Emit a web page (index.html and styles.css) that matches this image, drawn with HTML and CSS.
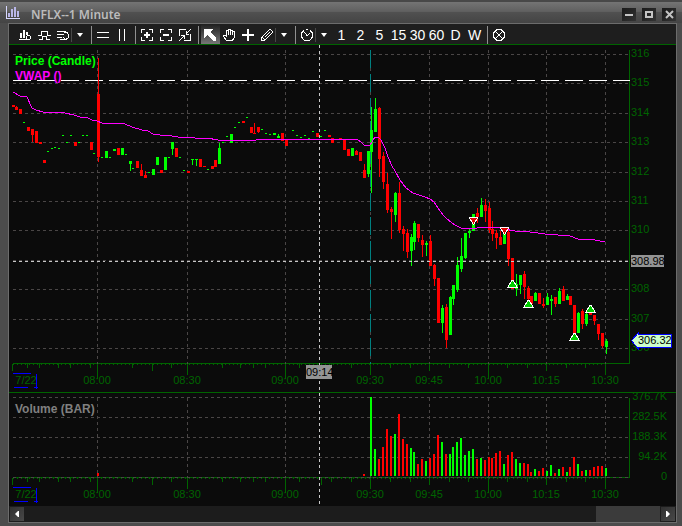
FILE: index.html
```html
<!DOCTYPE html>
<html lang="en">
<head>
    <meta charset="utf-8">
    <title>NFLX--1 Minute</title>
    <link rel="stylesheet" href="styles.css">
</head>
<body>
    <div class="window">
        <header class="titlebar">
            <svg class="app-icon" viewBox="0 0 14 13" width="14" height="13" aria-hidden="true">
                <path d="M0 0h1v12h13v1H0z" fill="#d8d8ff"/>
                <path d="M2 7h2v4H2zM5 3h2v8H5zM8 1h2v10H8zM11 5h2v6h-2z" fill="#b9b6e8"/>
            </svg>
            <h1 class="title">NFLX--1 Minute</h1>
            <div class="window-buttons">
                <button class="win-btn" aria-label="Minimize">
                    <svg viewBox="0 0 14 13" width="14" height="13"><path d="M3 6h8v2H3z" fill="#c4c4c4"/></svg>
                </button>
                <button class="win-btn" aria-label="Maximize">
                    <svg viewBox="0 0 14 13" width="14" height="13"><path d="M4 4h6v5H4z" fill="none" stroke="#c4c4c4" stroke-width="2"/></svg>
                </button>
                <button class="win-btn" aria-label="Close">
                    <svg viewBox="0 0 14 13" width="14" height="13"><path d="M4 3l7 7M11 3l-7 7" stroke="#c4c4c4" stroke-width="2"/></svg>
                </button>
            </div>
        </header>

        <main class="frame">
            <div class="toolbar">
                <button class="tool" aria-label="Chart settings">
                    <svg viewBox="0 0 13 13"><path d="M1 4h2v5H1zM4 1h2v8H4zM0 10h8v1H0zM7 3h2v3H7z" fill="#fff"/><circle cx="9.5" cy="8.500" r="2" fill="none" stroke="#fff"/></svg>
                </button>
                <button class="tool" aria-label="Studies">
                    <svg viewBox="0 0 13 13"><path d="M0 6.500h3.500v-4H9v4h3.500M1 10.500h3.500v-3H8v3h4" fill="none" stroke="#fff"/></svg>
                </button>
                <button class="tool" aria-label="Style">
                    <svg viewBox="0 0 13 13"><path d="M0 2.500h9M0 5.500h7M0 8.500h5M3 10.500h5" stroke="#fff"/><path d="M7 3.500h3l1.500 2v3l-2 1.500H8L6 8" fill="none" stroke="#fff"/></svg>
                </button>
                <button class="drop" aria-label="More styles"></button>
                <span class="sep"></span>
                <button class="tool" aria-label="Horizontal line">
                    <svg viewBox="0 0 13 13"><path d="M0 3h12v1H0zM0 8h12v1H0z" fill="#fff"/></svg>
                </button>
                <button class="tool" aria-label="Vertical line">
                    <svg viewBox="0 0 13 13"><path d="M3 0h1v12H3zM8 0h1v12H8z" fill="#fff"/></svg>
                </button>
                <span class="sep"></span>
                <button class="tool" aria-label="Zoom in">
                    <svg viewBox="0 0 13 13"><path d="M4 .5H.5V4M8 .5h3.500V4M4 11.500H.5V8M8 11.500h3.500V8" fill="none" stroke="#fff"/><path d="M5 3h2v2h2v2H7v2H5V7H3V5h2z" fill="#fff"/></svg>
                </button>
                <button class="tool" aria-label="Zoom out">
                    <svg viewBox="0 0 13 13"><path d="M4 .5H.5V4M8 .5h3.500V4M4 11.500H.5V8M8 11.500h3.500V8" fill="none" stroke="#fff"/><path d="M3 5h6v2H3z" fill="#fff"/></svg>
                </button>
                <button class="tool" aria-label="Reset zoom">
                    <svg viewBox="0 0 13 13"><path d="M7 .5H.5V7M11.500 5v6.500H5M12 0L7 5M7 2v3.500h3M0 12l5-5M2 6.500h3.500V10" fill="none" stroke="#fff"/></svg>
                </button>
                <span class="sep"></span>
                <button class="tool active" aria-label="Pointer" aria-pressed="true">
                    <svg viewBox="0 0 13 13"><path d="M0 0h9L7 3l5 6v3h-2L3 6 0 9z" fill="#fff"/></svg>
                </button>
                <button class="tool" aria-label="Pan">
                    <svg viewBox="0 0 13 13"><path d="M3.500 11.500L.5 7.500V6h1l2 1.500v-5L4 1.500h1v4V.5h2v5V1.500h2v4l.5-3h2V8l-2 3.500z" fill="none" stroke="#fff"/></svg>
                </button>
                <button class="tool" aria-label="Crosshair">
                    <svg viewBox="0 0 13 13"><path d="M5 0h2v5h5v2H7v5H5V7H0V5h5z" fill="#fff"/></svg>
                </button>
                <button class="tool" aria-label="Draw">
                    <svg viewBox="0 0 13 13"><path d="M.5 11.500v-3l8-8h1l2 2v1l-8 8zM1 8l3 3M3.500 8.500l5-5" fill="none" stroke="#fff"/></svg>
                </button>
                <button class="drop" aria-label="More drawing tools"></button>
                <span class="sep"></span>
                <button class="tool" aria-label="Interval">
                    <svg viewBox="0 0 13 13"><path d="M3 1.500L.5 4v4l3 3.500h5l3-3.500V4L9 1.500M5 .5h2M3.500 3.500l2.500 3 3-2" fill="none" stroke="#fff"/></svg>
                </button>
                <button class="drop" aria-label="More intervals"></button>
                <button class="tool">1</button>
                <button class="tool">2</button>
                <button class="tool">5</button>
                <button class="tool">15</button>
                <button class="tool">30</button>
                <button class="tool">60</button>
                <button class="tool">D</button>
                <button class="tool">W</button>
                <span class="sep"></span>
                <button class="tool" aria-label="Unlink">
                    <svg viewBox="0 0 13 13"><path d="M4 .5h4l3.500 3.500v4L8 11.500H4L.5 8V4zM2 2l8 8M10 2l-8 8" fill="none" stroke="#fff"/></svg>
                </button>
            </div>

            <svg class="pane" id="pricePane" viewBox="9 45 667 347" role="img" aria-label="Price chart">
                <g id="priceGrid"></g>
                <path class="last-line" d="M12 80h617"/>
                <path class="session" d="M370 49v314"/>
                <g class="labels">
                    <text class="heading price-name" x="15" y="65">Price (Candle)</text>
                    <text class="heading vwap-name" x="15" y="80">VWAP ()</text>
                </g>
                <g id="candles"></g>
                <polyline class="vwap" points="13,92 20,96 27,97 32,108 36,110 43,112 65,113 74,115 80,117 88,118 92,120 97,121 102,123 125,124 132,127 142,130 148,131 153,134 160,135 172,136 178,137 195,138 207,138 218,140 256,140 257,139 345,139 358,140 361,142 364,145 370,145 375,137 378,137 381,140 385,148 388,157 392,166 395,171 400,180 406,188 413,193 425,197 430,199 434,202 438,208 443,215 447,219 455,225 461,228 477,228 479,227 496,227 504,229 515,231 530,232 545,234 570,236 578,239 595,240 605,242"/>
                <g class="sell">
                    <path d="M469 217h9l-4 7h-1z"/>
                    <path d="M500 227h9l-4 7h-1z"/>
                </g>
                <g class="buy">
                    <path d="M508 287h9l-4-7h-1z"/>
                    <path d="M524 307h9l-4-7h-1z"/>
                    <path d="M570 340h9l-4-7h-1z"/>
                    <path d="M586 312h9l-4-7h-1z"/>
                </g>
                <path class="crosshair" d="M12 261h617M319 44v348"/>
                <g class="axis-text">
                    <text x="631" y="57">316</text>
                    <text x="631" y="86">315</text>
                    <text x="631" y="116">314</text>
                    <text x="631" y="145">313</text>
                    <text x="631" y="175">312</text>
                    <text x="631" y="204">311</text>
                    <text x="631" y="233">310</text>
                    <text x="631" y="292">308</text>
                    <text x="631" y="322">307</text>
                    <text x="631" y="351">306</text>
                </g>
                <g class="axis-text times">
                    <text x="26" y="384">7/22</text>
                    <text x="97" y="384">08:00</text>
                    <text x="187" y="384">08:30</text>
                    <text x="285" y="384">09:00</text>
                    <text x="370" y="384">09:30</text>
                    <text x="429" y="384">09:45</text>
                    <text x="488" y="384">10:00</text>
                    <text x="546" y="384">10:15</text>
                    <text x="605" y="384">10:30</text>
                </g>
                <path class="day-mark" d="M12 373h18M36 373v15M33 387h4M13 387h14"/>
                <rect class="cursor-box" x="631" y="255" width="33" height="12"/>
                <text class="cursor-text" x="631" y="265">308.98</text>
                <rect class="cursor-box" x="306" y="365" width="26" height="14"/>
                <text class="cursor-text" x="306" y="376">09:14</text>
                <path class="last-tag" d="M631 340l7-8v2h33v13h-33v2z"/>
                <text class="cursor-text" x="638" y="344">306.32</text>
            </svg>

            <svg class="pane volume" id="volumePane" viewBox="9 393 667 113" role="img" aria-label="Volume chart">
                <g id="volumeGrid"></g>
                <text class="heading volume-name" x="15" y="413">Volume (BAR)</text>
                <g id="bars"></g>
                <g class="axis-text volumes">
                    <text x="667" y="400">376.7K</text>
                    <text x="667" y="420">282.5K</text>
                    <text x="667" y="440">188.3K</text>
                    <text x="667" y="460">94.2K</text>
                    <text x="667" y="480">0</text>
                </g>
                <g class="axis-text times">
                    <text x="26" y="498">7/22</text>
                    <text x="97" y="498">08:00</text>
                    <text x="187" y="498">08:30</text>
                    <text x="285" y="498">09:00</text>
                    <text x="370" y="498">09:30</text>
                    <text x="429" y="498">09:45</text>
                    <text x="488" y="498">10:00</text>
                    <text x="546" y="498">10:15</text>
                    <text x="605" y="498">10:30</text>
                </g>
                <path class="day-mark" d="M12 487h18M36 487v15M33 501h4M13 501h14"/>
                <path class="crosshair" d="M319 392v114"/>
            </svg>

            <div class="scrollbar">
                <button class="scroll-btn" aria-label="Scroll left">
                    <svg viewBox="0 0 4 6" width="4" height="6"><path d="M0 3l3-3h1v6H3z" fill="#fff"/></svg>
                </button>
                <div class="track"><div class="thumb"></div></div>
                <button class="scroll-btn" aria-label="Scroll right">
                    <svg viewBox="0 0 4 6" width="4" height="6"><path d="M4 3L1 0H0v6h1z" fill="#fff"/></svg>
                </button>
            </div>
        </main>
    </div>

    <script src="chart.js"></script>
</body>
</html>
```

FILE: styles.css
```css
body {
    margin: 0;
    background: #4c4c4c;
    font-family: "Liberation Sans", Arial, sans-serif;
    font-size: 11px;
}
button {
    padding: 0;
    border: none;
    background: none;
    color: #fff;
    font: inherit;
}
.window {
    padding: 0 5px 3px 8px;
    background: #4c4c4c;
}

/* title bar */
.titlebar {
    display: flex;
    align-items: center;
    height: 23px;
    margin: 0 -5px 0 -8px;
    padding: 0 6px;
    box-sizing: border-box;
    border-top: 2px solid #484848;
    background: linear-gradient(#747474, #606060 45%, #505050 50%, #444444);
}
.title {
    flex: 1;
    margin: 0 0 0 11px;
    padding-top: 4px;
    color: #bcbcbc;
    font-family: "Noto Sans", Tahoma, sans-serif;
    font-size: 12px;
    font-weight: 600;
    line-height: 16px;
}
.window-buttons {
    display: flex;
    gap: 6px;
    padding-top: 4px;
}
.win-btn {
    width: 14px;
    height: 13px;
    background: linear-gradient(135deg, #1a1a1a, #333333);
}
.win-btn svg {
    display: block;
}

/* chart frame */
.frame {
    border: 1px solid #6c6c6c;
    background: #0b0b0b;
}
.toolbar {
    display: flex;
    align-items: stretch;
    height: 20px;
    padding-left: 7px;
    background: #1e1e1e;
    border-bottom: 1px solid #006400;
}
.tool {
    display: flex;
    align-items: center;
    justify-content: center;
    width: 19px;
    padding-top: 3px;
    font-size: 14px;
    line-height: 17px;
}
.tool svg {
    width: 13px;
    height: 13px;
    shape-rendering: crispEdges;
}
.tool.active {
    background: linear-gradient(#1e1e1e, #777777);
}
.drop {
    width: 17px;
    margin: 4px 0 2px -2px;
    border-left: 1px solid #484848;
}
.drop::before {
    content: "";
    display: block;
    width: 0;
    margin: 0 auto;
    border: 3px solid transparent;
    border-top: 4px solid #fff;
    border-bottom: none;
}
.sep {
    width: 1px;
    margin: 2px 2px 0 3px;
    background: #909090;
}

/* chart panes */
.pane {
    display: block;
    width: 100%;
    height: auto;
    border-bottom: 1px solid #006400;
    background: #0b0b0b;
}
.pane.volume {
    border-bottom: none;
}
.pane path,
.pane rect,
.pane polyline {
    shape-rendering: crispEdges;
}
.grid {
    stroke: #4a4646;
    stroke-dasharray: 3 3;
}
.axis {
    fill: none;
    stroke: #006400;
}
.axis.minor {
    stroke-dasharray: 1 3;
}
.last-line {
    stroke: #fff;
    stroke-dasharray: 18 6;
}
.session {
    stroke: #008080;
    stroke-dasharray: 18 6;
}
.crosshair {
    stroke: #c8c8c8;
    stroke-dasharray: 3 3;
}
.last-line,
.session,
.crosshair,
.day-mark,
.last-tag {
    transform: translate(0.5px, 0.5px);
}
.day-mark {
    fill: none;
    stroke: #0000ff;
}
.vwap {
    fill: none;
    stroke: #ff00ff;
}
.up {
    fill: #00ff00;
}
.down {
    fill: #ff0000;
}
.sell path {
    fill: #e00000;
    stroke: #fff;
}
.buy path {
    fill: #00d000;
    stroke: #fff;
}
.heading {
    font-size: 12px;
    font-weight: bold;
}
.price-name {
    fill: #00ff00;
}
.vwap-name {
    fill: #ff00ff;
}
.volume-name {
    fill: #808080;
}
.axis-text {
    fill: #006400;
}
.times {
    text-anchor: middle;
}
.volumes {
    text-anchor: end;
}
.cursor-box {
    fill: #949494;
}
.cursor-text {
    fill: #000;
}
.last-tag {
    fill: #ccffcc;
    stroke: #0000ff;
}

/* scrollbar */
.scrollbar {
    display: flex;
    height: 16px;
    padding: 0 1px;
    background: #1c1c1c;
}
.scroll-btn {
    display: flex;
    align-items: center;
    justify-content: center;
    width: 14px;
    margin: 1px 0;
    background: linear-gradient(135deg, #303030, #484848);
}
.track {
    flex: 1;
    display: flex;
    justify-content: flex-end;
    padding-right: 1px;
}
.thumb {
    width: 10%;
    background: #3b3b3b;
}
```

FILE: chart.js
```js
const NS = 'http://www.w3.org/2000/svg';

// x, high, body top, body bottom, low, 1 = up / 0 = down
const candles = [
    [13,105,105,107,107,0],[16,106,107,110,110,0],[20,109,109,114,114,0],[28,127,127,131,131,0],
    [32,129,129,135,142,0],[36,131,131,143,143,0],[40,142,142,144,144,0],[44,160,160,163,163,0],
    [75,142,142,146,146,0],[91,142,142,150,150,0],[98,58,94,157,162,0],[106,151,151,158,158,1],
    [114,149,149,151,151,1],[118,148,148,155,155,0],[122,148,148,155,155,1],[130,161,161,164,171,1],
    [137,161,161,168,168,0],[141,164,170,176,176,0],[145,171,175,178,178,0],[153,169,169,175,175,1],
    [157,157,157,165,165,1],[161,170,170,173,173,0],[165,157,157,170,170,1],[172,142,142,149,155,1],
    [176,148,148,157,157,0],[188,171,171,173,173,0],[192,159,159,160,165,1],[196,159,159,160,166,1],
    [200,159,159,167,167,0],[204,166,166,167,167,0],[212,166,166,169,169,0],[215,160,160,167,167,0],
    [219,143,148,164,164,1],[231,134,134,143,143,1],[243,121,121,123,123,0],[251,127,127,133,133,0],
    [254,123,133,134,134,0],[258,127,127,132,133,0],[274,133,133,135,135,1],[278,134,136,138,138,1],
    [282,133,133,141,141,0],[286,140,140,146,146,0],[317,133,133,137,137,0],[329,135,135,137,137,0],
    [332,138,138,143,143,0],[336,139,139,140,140,0],[340,138,138,140,140,0],[344,139,139,150,150,0],
    [348,149,149,156,156,0],[352,148,148,156,156,1],[356,150,151,155,155,0],[360,152,152,161,161,0],
    [364,164,170,178,178,0],[368,151,151,174,177,1],[371,107,130,152,193,1],[375,98,109,132,132,1],
    [379,107,108,159,177,0],[383,152,156,182,189,0],[387,173,184,210,213,0],[391,207,209,212,239,0],
    [395,192,193,215,222,1],[399,182,193,230,233,0],[403,226,229,234,251,0],[407,229,233,252,258,0],
    [411,234,237,251,266,1],[414,221,223,242,250,1],[418,224,224,238,242,0],[422,235,240,245,257,0],
    [426,241,243,245,256,1],[430,235,241,266,266,0],[434,264,265,279,286,0],[438,278,278,323,323,0],
    [442,305,308,323,333,1],[446,304,307,340,348,0],[450,296,297,335,335,1],[453,285,285,299,305,1],
    [457,257,265,290,292,1],[461,238,256,269,272,1],[465,233,233,258,259,1],[469,228,231,233,238,1],
    [473,214,214,231,231,1],[477,208,213,217,223,0],[481,198,205,217,217,1],[485,199,205,211,222,0],
    [489,202,208,230,233,0],[492,221,229,234,241,0],[496,230,233,238,249,0],[500,231,237,245,245,0],
    [504,233,233,244,244,1],[508,228,232,259,266,0],[512,258,258,289,289,0],[516,274,284,289,296,1],
    [520,275,275,285,294,1],[524,271,274,287,299,0],[528,286,288,299,305,0],[531,296,296,304,304,0],
    [535,292,293,301,301,1],[539,293,293,304,304,0],[543,298,304,306,308,0],[547,293,297,305,305,1],
    [551,295,299,301,315,1],[555,297,297,304,307,0],[559,288,291,304,304,1],[563,286,289,301,301,0],
    [567,294,296,300,300,1],[570,296,296,305,305,0],[574,305,305,333,333,0],[578,312,313,333,333,1],
    [582,309,311,324,329,0],[586,311,314,324,326,1],[590,312,312,315,315,0],[594,315,315,321,325,0],
    [598,324,324,334,340,0],[602,333,333,346,348,0],[606,339,341,347,354,1]
];

// minutes with a single print: x, y
const prints = [
    [24,122],[48,151],[52,148],[55,147],[59,148],[63,135],[67,142],[71,135],[79,142],[83,135],[87,135],
    [94,153],[102,157],[110,157],[126,154],[133,168],[149,172],[169,157],[180,157],[184,170],[208,169],
    [223,142],[227,136],[235,127],[239,122],[247,117],[262,129],[266,133],[270,134],[290,139],[293,130],
    [297,135],[301,137],[305,135],[309,138],[313,131],[321,136],[325,130]
];

// x, top, 1 = up / 0 = down
const volume = [
    [97,473,0],[363,474,0],[370,397,1],[374,449,1],[378,459,0],[382,447,0],[386,429,0],[390,436,0],
    [394,434,1],[398,414,0],[402,439,0],[406,444,0],[410,448,1],[413,452,1],[417,464,0],[421,459,0],
    [425,461,1],[429,458,0],[433,454,0],[437,435,0],[441,442,1],[445,454,0],[449,454,1],[452,447,1],
    [456,442,1],[460,438,1],[464,455,1],[468,451,1],[472,449,1],[476,459,0],[480,458,1],[484,460,0],
    [488,457,0],[491,458,0],[495,453,0],[499,451,0],[503,464,1],[507,455,0],[511,452,0],[515,459,1],
    [519,463,1],[523,463,0],[527,464,0],[530,472,0],[534,469,1],[538,471,0],[542,468,0],[546,471,1],
    [550,465,1],[554,473,0],[558,469,1],[562,467,0],[566,472,1],[569,467,0],[573,457,0],[577,464,1],
    [581,471,0],[585,470,1],[589,470,0],[593,467,0],[597,466,0],[601,466,0],[605,468,1]
];

const columns = [97, 187, 285, 370, 429, 488, 546, 605];

// x, length
const ticks = [
    [12,7],[27,4],[39,4],[58,4],[70,4],[90,4],[97,15],[132,4],[152,7],[171,4],[187,11],[222,4],[240,4],
    [253,4],[265,4],[285,15],[299,4],[321,7],[331,4],[351,4],[370,11],[390,4],[410,4],[429,7],[449,4],
    [468,4],[488,15],[507,4],[527,4],[546,7],[566,4],[585,4],[605,11]
];

function add(parent, name, attrs) {
    const el = document.createElementNS(NS, name);
    for (const key in attrs) el.setAttribute(key, attrs[key]);
    parent.appendChild(el);
}

function box(parent, x, y, width, height, up) {
    add(parent, 'rect', { x, y, width, height, class: up ? 'up' : 'down' });
}

function drawGrid(id, rows, top, bottom) {
    const g = document.getElementById(id);
    // centre one-pixel strokes on the pixel grid
    g.setAttribute('transform', 'translate(.5 .5)');
    add(g, 'path', { class: 'axis', d: `M629 ${top}V${bottom}H12` });
    rows.forEach(y => add(g, 'path', { class: 'grid', d: `M12 ${y}H629` }));
    columns.forEach(x => add(g, 'path', { class: 'grid', d: `M${x} ${top}V${bottom}` }));
    add(g, 'path', { class: 'axis minor', d: `M12 ${bottom + 1}H606` });
    ticks.forEach(([x, len]) => add(g, 'path', { class: 'axis', d: `M${x} ${bottom}v${len}` }));
}

drawGrid('priceGrid', [54, 83, 113, 142, 172, 201, 230, 260, 289, 319, 348], 49, 363);
drawGrid('volumeGrid', [397, 417, 437, 457, 477], 397, 477);

const candleLayer = document.getElementById('candles');
prints.forEach(([x, y]) => box(candleLayer, x - 1, y, 2, 1, true));
candles.forEach(([x, high, top, bottom, low, up]) => {
    box(candleLayer, x, high, 1, low - high, up);
    box(candleLayer, x - 1, top, 3, bottom - top, up);
});

const barLayer = document.getElementById('bars');
volume.forEach(([x, top, up]) => box(barLayer, x, top, 2, 476 - top, up));
```
